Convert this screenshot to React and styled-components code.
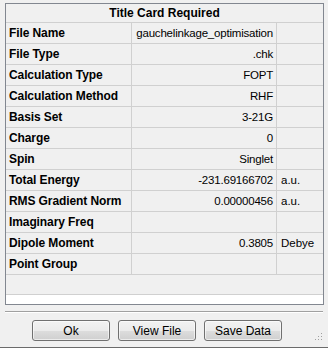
import React from 'react';
import styled, { createGlobalStyle } from 'styled-components';

const GlobalStyle = createGlobalStyle`
  html, body {
    margin: 0;
    padding: 0;
    background: #f0f0f0;
  }
`;

const Window = styled.div`
  width: 328px;
  height: 348px;
  box-sizing: border-box;
  background: #f0f0f0;
  border-bottom: 1px solid #6b6b6b;
  padding: 3px 4px 0 5px;
  display: flex;
  flex-direction: column;
  position: relative;
  font-family: Tahoma, "Liberation Sans", Arial, sans-serif;
  font-size: 11px;
  color: #000;
`;

const Grid = styled.div`
  width: 319px;
  height: 302px;
  box-sizing: border-box;
  border: 1px solid #828790;
  display: flex;
  flex-direction: column;
  background: #f0f0f0;
`;

const TitleRow = styled.div`
  height: 18px;
  border-bottom: 1px solid #d0d0d0;
  display: flex;
  align-items: center;
  justify-content: center;
  font-weight: bold;
  font-size: 12px;
`;

const Row = styled.div`
  display: flex;
  height: ${p => (p.$empty ? 19 : 20)}px;
  border-bottom: 1px solid #d0d0d0;
`;

const Cell = styled.div`
  box-sizing: border-box;
  display: flex;
  align-items: center;
  white-space: nowrap;
  overflow: hidden;
`;

const Label = styled(Cell)`
  width: 126px;
  border-right: 1px solid #d0d0d0;
  padding-left: 3px;
  font-weight: bold;
  font-size: 12px;
  letter-spacing: -0.1px;
`;

const Value = styled(Cell)`
  width: 145px;
  border-right: 1px solid #d0d0d0;
  justify-content: flex-end;
  padding-right: 3px;
  font-size: 11.5px;
  letter-spacing: -0.2px;
`;

const Unit = styled(Cell)`
  flex: 1;
  padding-left: 4px;
  font-size: 11.5px;
`;

const Blank = styled.div`
  flex: 1;
  background: #fff;
`;

const Separator = styled.div`
  margin-top: 6px;
  width: 318px;
  height: 1px;
  background: #a0a0a0;
  border-bottom: 1px solid #fff;
`;

const ButtonBar = styled.div`
  display: flex;
  gap: 8px;
  padding-left: 27px;
  margin-top: 7px;
`;

const Button = styled.button`
  width: 78px;
  height: 21px;
  box-sizing: border-box;
  border: 1px solid #707070;
  border-radius: 3px;
  background: linear-gradient(#f2f2f2 0%, #ebebeb 50%, #dddddd 51%, #cfcfcf 100%);
  font-family: Tahoma, "Liberation Sans", Arial, sans-serif;
  font-size: 12px;
  color: #000;
  padding: 0;
  box-shadow: inset 0 0 0 1px rgba(255, 255, 255, 0.6);
`;

const Grip = styled.svg`
  position: absolute;
  right: 5px;
  bottom: 6px;
`;

const rows = [
  ['File Name', 'gauchelinkage_optimisation', ''],
  ['File Type', '.chk', ''],
  ['Calculation Type', 'FOPT', ''],
  ['Calculation Method', 'RHF', ''],
  ['Basis Set', '3-21G', ''],
  ['Charge', '0', ''],
  ['Spin', 'Singlet', ''],
  ['Total Energy', '-231.69166702', 'a.u.'],
  ['RMS Gradient Norm', '0.00000456', 'a.u.'],
  ['Imaginary Freq', '', ''],
  ['Dipole Moment', '0.3805', 'Debye'],
  ['Point Group', '', ''],
];

const App = () => (
  <>
    <GlobalStyle />
    <Window>
      <Grid>
        <TitleRow>Title Card Required</TitleRow>
        {rows.map(([label, value, unit]) => (
          <Row key={label}>
            <Label>{label}</Label>
            <Value>{value}</Value>
            <Unit>{unit}</Unit>
          </Row>
        ))}
        <Row $empty />
        <Blank />
      </Grid>
      <Separator />
      <ButtonBar>
        <Button>Ok</Button>
        <Button>View File</Button>
        <Button>Save Data</Button>
      </ButtonBar>
      <Grip width="10" height="10" viewBox="0 0 10 10">
        {[[8, 2], [8, 5], [5, 5], [8, 8], [5, 8], [2, 8]].map(([x, y]) => (
          <rect key={`${x}-${y}`} x={x} y={y} width="1" height="1" fill="#a0a0a0" />
        ))}
      </Grip>
    </Window>
  </>
);

export default App;
